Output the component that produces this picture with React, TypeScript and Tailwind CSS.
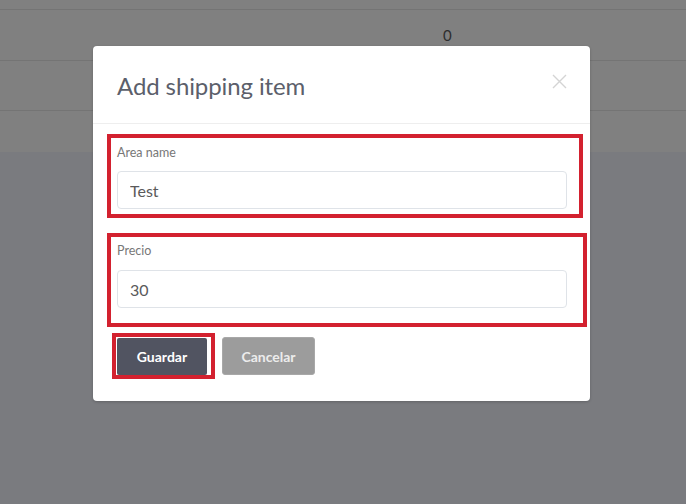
import React from "react";

const font = { fontFamily: "Lato, 'Open Sans', sans-serif" };

function Field({
  label,
  value,
  boxClass,
}: {
  label: string;
  value: string;
  boxClass: string;
}) {
  return (
    <div className={boxClass}>
      <label className="block text-[12.5px] leading-[16px] text-[#777]">{label}</label>
      <input
        readOnly
        value={value}
        className="block w-[450px] h-[38px] px-[12px] text-[16px] text-[#5a5a5a] bg-white border border-[#dfe3e8] rounded-[4px] outline-none"
        style={font}
      />
    </div>
  );
}

export default function App() {
  return (
    <div className="relative w-[686px] h-[504px] overflow-hidden bg-[#7a7b7f]" style={font}>
      {/* page behind the backdrop */}
      <div className="h-[152px] bg-[#808080]">
        <div className="h-[10px] border-b border-[#747474]" />
        <div className="h-[51px] border-b border-[#747474] flex items-center">
          <span className="ml-[443px] text-[15px] text-[#2e2e2e]">0</span>
        </div>
        <div className="h-[50px] border-b border-[#747474]" />
      </div>

      {/* modal */}
      <div className="absolute left-[93px] top-[46px] w-[497px] h-[355px] bg-white rounded-[4px] shadow-[0_1px_3px_rgba(0,0,0,0.2)]">
        <div className="h-[78px] flex items-center justify-between pl-[24px] pr-[23px] border-b border-[#eeeeee]">
          <h2 className="text-[24px] text-[#5c5f6b] tracking-[-0.1px] pt-[2px]">Add shipping item</h2>
          <svg width="15" height="15" viewBox="0 0 15 15" className="mb-[6px]">
            <path d="M1 1L14 14M14 1L1 14" stroke="#d4d4d4" strokeWidth="1.4" />
          </svg>
        </div>

        <div className="pl-[14px] pt-[10px]">
          <Field
            label="Area name"
            value="Test"
            boxClass="w-[476px] h-[84px] border-[4px] border-[#d3212f] pl-[6px] pt-[7px] flex flex-col gap-[10px]"
          />
          <div className="h-[15px]" />
          <Field
            label="Precio"
            value="30"
            boxClass="w-[480px] h-[94px] border-[4px] border-[#d3212f] pl-[6px] pt-[6px] flex flex-col gap-[11px]"
          />
          <div className="flex items-start gap-[7px] mt-[6px] ml-[5px]">
            <div className="w-[103px] h-[46px] border-[4px] border-[#d3212f] pl-[1px] pt-[1px]">
              <button className="w-[90px] h-[37px] bg-[#515461] text-white text-[14px] font-bold rounded-[2px]">
                Guardar
              </button>
            </div>
            <button className="mt-[4px] w-[93px] h-[38px] bg-[#9c9c9c] text-[#ececec] text-[14px] font-bold rounded-[3px] border border-[#a8a8a8]">
              Cancelar
            </button>
          </div>
        </div>
      </div>
    </div>
  );
}
